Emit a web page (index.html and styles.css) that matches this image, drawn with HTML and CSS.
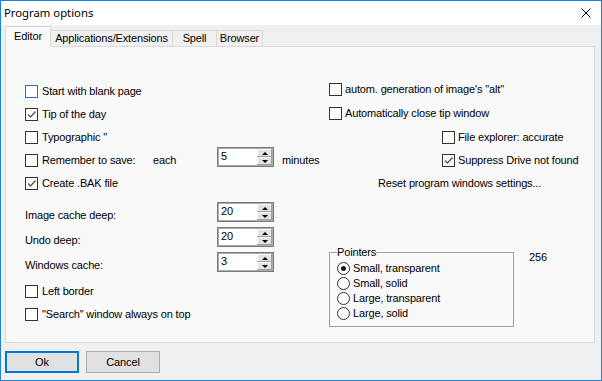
FILE: index.html
```html
<!DOCTYPE html>
<html>
<head>
<meta charset="utf-8">
<title>Program options</title>
<link rel="stylesheet" href="styles.css">
</head>
<body>
<div class="window">
  <div class="titlebar">
    <span class="title">Program options</span>
    <svg class="close" width="10" height="10" viewBox="0 0 10 10"><path d="M0.5 0.5L9.5 9.5M9.5 0.5L0.5 9.5" stroke="#000" stroke-width="1" fill="none"/></svg>
  </div>
  <div class="client">
    <div class="tabs">
      <div class="tab active">Editor</div>
      <div class="tab w-apps">Applications/Extensions</div>
      <div class="tab w-spell">Spell</div>
      <div class="tab w-browser">Browser</div>
    </div>
    <div class="panel">
      <div class="col-left">
        <div class="row"><span class="cb focus"></span><span>Start with blank page</span></div>
        <div class="row"><span class="cb"><svg width="11" height="11" viewBox="0 0 11 11"><path d="M2 5.5L4.5 8L9.5 2.5" stroke="#555" stroke-width="1.4" fill="none"/></svg></span><span>Tip of the day</span></div>
        <div class="row"><span class="cb"></span><span>Typographic "</span></div>
        <div class="rem-row">
          <div class="first"><span class="cb"></span><span class="rem">Remember to save:</span><span>each</span></div>
          <div class="spin up2"><span class="val">5</span><span class="arrows"><span class="arrow"><i class="tri-up"></i></span><span class="arrow"><i class="tri-down"></i></span></span></div>
          <span class="minutes">minutes</span>
        </div>
        <div class="row"><span class="cb"><svg width="11" height="11" viewBox="0 0 11 11"><path d="M2 5.5L4.5 8L9.5 2.5" stroke="#555" stroke-width="1.4" fill="none"/></svg></span><span>Create .BAK file</span></div>
        <div class="spins">
          <div class="srow"><span class="lbl">Image cache deep:</span><div class="spin"><span class="val">20</span><span class="arrows"><span class="arrow"><i class="tri-up"></i></span><span class="arrow"><i class="tri-down"></i></span></span></div></div>
          <div class="srow"><span class="lbl">Undo deep:</span><div class="spin"><span class="val">20</span><span class="arrows"><span class="arrow"><i class="tri-up"></i></span><span class="arrow"><i class="tri-down"></i></span></span></div></div>
          <div class="srow"><span class="lbl">Windows cache:</span><div class="spin"><span class="val">3</span><span class="arrows"><span class="arrow"><i class="tri-up"></i></span><span class="arrow"><i class="tri-down"></i></span></span></div></div>
        </div>
        <div class="after">
          <div class="row"><span class="cb"></span><span>Left border</span></div>
          <div class="row"><span class="cb"></span><span>"Search" window always on top</span></div>
        </div>
      </div>
      <div class="col-right">
        <div class="rrow"><span class="cb"></span><span>autom. generation of image's "alt"</span></div>
        <div class="rrow"><span class="cb"></span><span>Automatically close tip window</span></div>
        <div class="rrow indent"><span class="cb"></span><span>File explorer: accurate</span></div>
        <div class="rrow short indent"><span class="cb"><svg width="11" height="11" viewBox="0 0 11 11"><path d="M2 5.5L4.5 8L9.5 2.5" stroke="#555" stroke-width="1.4" fill="none"/></svg></span><span>Suppress Drive not found</span></div>
        <div class="rrow short reset"><span>Reset program windows settings...</span></div>
        <div class="pointers">
          <fieldset class="group">
            <legend>Pointers</legend>
            <div class="radio-row"><span class="rb on"></span><span>Small, transparent</span></div>
            <div class="radio-row"><span class="rb"></span><span>Small, solid</span></div>
            <div class="radio-row"><span class="rb"></span><span>Large, transparent</span></div>
            <div class="radio-row"><span class="rb"></span><span>Large, solid</span></div>
          </fieldset>
          <span class="count">256</span>
        </div>
      </div>
    </div>
    <div class="footer">
      <button class="btn default">Ok</button>
      <button class="btn">Cancel</button>
    </div>
  </div>
</div>
</body>
</html>
```
FILE: styles.css
```css
* { box-sizing: border-box; }

body {
  margin: 0;
  font-family: "Liberation Sans", Arial, sans-serif;
  font-size: 11px;
  line-height: 13px;
  color: #000;
  letter-spacing: -0.15px;
}

.window {
  width: 602px;
  height: 381px;
  border: 1px solid #1883d7;
  background: #f0f0f0;
  display: flex;
  flex-direction: column;
  overflow: hidden;
}

.titlebar {
  height: 24px;
  flex: none;
  background: #fff;
  display: flex;
  align-items: center;
  justify-content: space-between;
  padding: 0 10px 0 3px;
}

.title {
  font-family: "Noto Sans", sans-serif;
  font-size: 11.3px;
  line-height: 14px;
  letter-spacing: 0;
}

.close { display: block; }

.client {
  flex: 1;
  padding: 1px 6px 0 4px;
  display: flex;
  flex-direction: column;
}

.tabs {
  display: flex;
  align-items: flex-end;
  height: 20px;
  position: relative;
  z-index: 1;
  flex: none;
}

.tab {
  height: 16px;
  border-top: 1px solid #d9d9d9;
  border-right: 1px solid #d9d9d9;
  background: #f0f0f0;
  text-align: center;
  padding-top: 1px;
  white-space: nowrap;
}

.tab.active {
  width: 46px;
  height: 21px;
  margin-bottom: -1px;
  border: 1px solid #d9d9d9;
  border-bottom: none;
  background: #f9f9f9;
  padding-top: 3px;
}

.w-apps { width: 122px; }
.w-spell { width: 44px; }
.w-browser { width: 46px; }

.panel {
  height: 297px;
  flex: none;
  border: 1px solid #d9d9d9;
  background: #f9f9f9;
  display: flex;
}

.col-left {
  width: 323px;
  flex: none;
  padding: 33px 0 0 19px;
}

.row {
  height: 23px;
  display: flex;
  align-items: center;
  gap: 4px;
  white-space: nowrap;
}

.cb {
  width: 13px;
  height: 13px;
  flex: none;
  border: 1px solid #333;
  background: #fff;
  display: flex;
}

.cb svg { display: block; }

.cb.focus { border-color: #1e78d2; }

.rem-row {
  display: grid;
  grid-template-columns: 192px 57px auto;
  height: 23px;
  align-items: center;
  white-space: nowrap;
}

.rem-row .first {
  display: flex;
  align-items: center;
  gap: 4px;
}

.rem { width: 107px; }

.spin.up2 {
  align-self: start;
  margin-top: -2px;
}

.minutes { margin-left: 8px; }

.spins {
  margin-top: 7px;
  display: flex;
  flex-direction: column;
  gap: 5px;
}

.srow {
  display: grid;
  grid-template-columns: 192px 57px;
  height: 20px;
}

.lbl { padding-top: 7px; white-space: nowrap; }

.spin {
  width: 57px;
  height: 20px;
  border: 1px solid #7a7a7a;
  box-shadow: inset 0 0 0 1px #ababab;
  background: #fff;
  display: flex;
  justify-content: space-between;
  padding: 1px 1px 1px 3px;
}

.val { padding-top: 1px; }

.arrows {
  width: 15px;
  height: 16px;
  display: flex;
  flex-direction: column;
}

.arrow {
  height: 8px;
  background: #e3e3e3;
  box-shadow: inset -1px -1px #a0a0a0, inset 1px 1px #fff;
  display: flex;
  align-items: center;
  justify-content: center;
}

.tri-up {
  width: 0;
  height: 0;
  border-left: 3px solid transparent;
  border-right: 3px solid transparent;
  border-bottom: 3px solid #000;
}

.tri-down {
  width: 0;
  height: 0;
  border-left: 3px solid transparent;
  border-right: 3px solid transparent;
  border-top: 3px solid #000;
}

.after { margin-top: 8px; }

.col-right {
  flex: 1;
  padding-top: 30px;
}

.rrow {
  height: 24px;
  display: flex;
  align-items: center;
  gap: 3px;
  white-space: nowrap;
}

.rrow.short { height: 23px; }

.indent { margin-left: 113px; }

.reset { padding-left: 49px; }

.pointers {
  margin-top: 51px;
  display: flex;
  align-items: flex-start;
}

.group {
  margin: 0;
  width: 185px;
  min-width: 0;
  border: 1px solid #a0a0a0;
  padding: 2px 6px 5px 7px;
}

.group legend {
  padding: 0;
  line-height: 13px;
}

.radio-row {
  height: 15px;
  display: flex;
  align-items: center;
  gap: 3px;
  white-space: nowrap;
}

.rb {
  width: 13px;
  height: 13px;
  flex: none;
  border-radius: 50%;
  border: 1px solid #333;
  background: #fff;
  display: flex;
  align-items: center;
  justify-content: center;
}

.rb.on::after {
  content: "";
  width: 5px;
  height: 5px;
  border-radius: 50%;
  background: #1a1a1a;
}

.count {
  margin-left: 15px;
  margin-top: 5px;
}

.footer {
  padding-top: 8px;
  display: flex;
  gap: 7px;
}

.btn {
  width: 74px;
  height: 22px;
  padding: 0;
  margin: 0;
  background: #e1e1e1;
  border: 1px solid #adadad;
  font: inherit;
  letter-spacing: inherit;
  color: #000;
}

.btn.default { border: 2px solid #0078d7; }
```
